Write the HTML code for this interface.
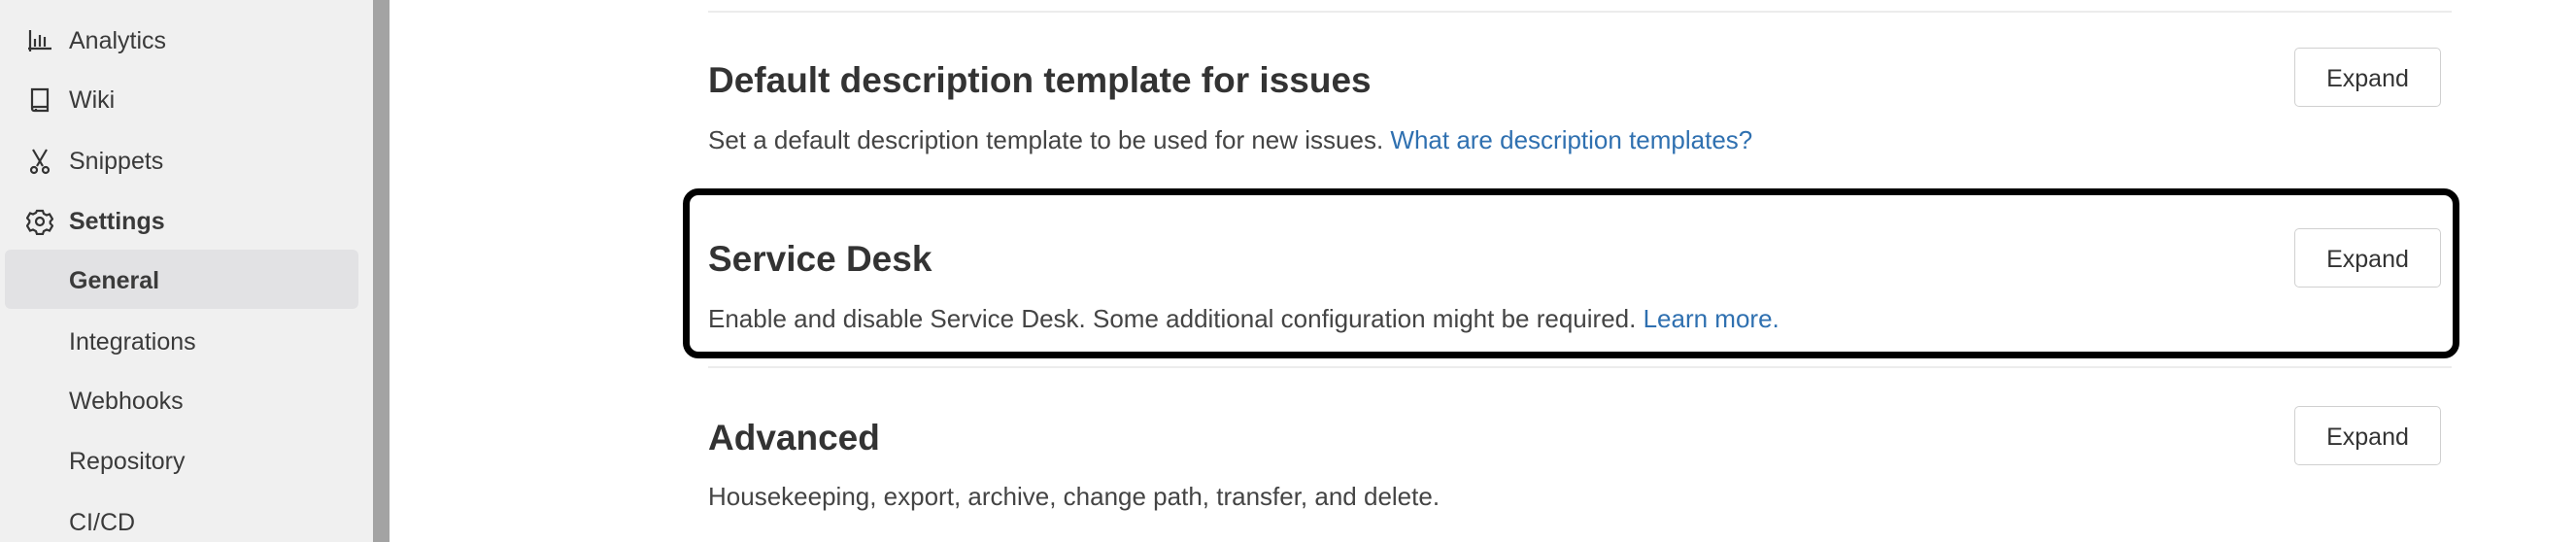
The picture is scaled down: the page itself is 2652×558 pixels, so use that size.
<!DOCTYPE html>
<html><head><meta charset="utf-8"><style>
*{margin:0;padding:0;box-sizing:border-box}
body{width:2652px;height:558px;overflow:hidden;background:#fff;font-family:"Liberation Sans",sans-serif;position:relative;color:#333}
.side{position:absolute;left:0;top:0;width:384px;height:558px;background:#f0f0f0}
.bar{position:absolute;left:384px;top:0;width:17px;height:558px;background:#a3a3a3}
.it{position:absolute;left:71px;font-size:25px;color:#3a3a3a;line-height:30px;transform:translateY(-15px)}
.ic{position:absolute;left:27px;width:28px;height:28px;transform:translateY(-14px)}
.hl{position:absolute;left:5px;top:257px;width:364px;height:61px;background:#e2e2e4;border-radius:6px}
.t{position:absolute;left:729px;white-space:nowrap}
h2{font-size:37px;font-weight:600;color:#333;line-height:42px;transform:translateY(-21px)}
.d{font-size:26px;color:#444;line-height:30px;transform:translateY(-15px)}
.d a{color:#2f70b0;text-decoration:none}
.ln{position:absolute;left:729px;width:1795px;height:2px;background:#ececec}
.btn{position:absolute;left:2362px;width:151px;height:61px;border:1.5px solid #d0d0d0;border-radius:5px;font-size:25px;color:#333;display:flex;align-items:center;justify-content:center;background:#fff;padding-top:3px}
.box{position:absolute;left:703px;top:194px;width:1829px;height:175px;border:7px solid #000;border-radius:16px}
</style></head><body>
<div class="side"></div><div class="bar"></div>
<div class="hl"></div>
<svg class="ic" style="top:42px" viewBox="0 0 28 28" fill="none" stroke="#333" stroke-width="2.2"><path d="M4 3v22M2 22h24M9 12v8M14 8v12M19 10v10"/></svg>
<div class="it" style="top:42px">Analytics</div>
<svg class="ic" style="top:103px" viewBox="0 0 28 28" fill="none" stroke="#333" stroke-width="2.2"><path d="M6 3h16v18H8a2 2 0 0 0-2 2v-20zM6 23a2 2 0 0 0 2 2h14v-4M10 25v-2"/></svg>
<div class="it" style="top:103px">Wiki</div>
<svg class="ic" style="top:166px" viewBox="0 0 28 28" fill="none" stroke="#333" stroke-width="2.2"><path d="M7 2l10 17M21 2L11 19"/><circle cx="8" cy="23" r="3"/><circle cx="20" cy="23" r="3"/></svg>
<div class="it" style="top:166px">Snippets</div>
<svg class="ic" style="top:228px" viewBox="0 0 28 28" fill="none" stroke="#333" stroke-width="2.2"><path d="M11 3h6l1 3 3 1.5 3-1 3 5-2.3 2.5v2l2.3 2.5-3 5-3-1-3 1.5-1 3h-6l-1-3-3-1.5-3 1-3-5L3.3 15v-2L1 10.5l3-5 3 1L10 5z"/><circle cx="14" cy="14" r="4"/></svg>
<div class="it" style="top:228px;font-weight:bold">Settings</div>
<div class="it" style="top:289px;font-weight:bold">General</div>
<div class="it" style="top:352px">Integrations</div>
<div class="it" style="top:413px">Webhooks</div>
<div class="it" style="top:475px">Repository</div>
<div class="it" style="top:538px">CI/CD</div>

<div class="ln" style="top:11px"></div>
<h2 class="t" style="top:83px">Default description template for issues</h2>
<div class="t d" style="top:144px">Set a default description template to be used for new issues. <a>What are description templates?</a></div>
<div class="btn" style="top:49px">Expand</div>

<div class="box"></div>
<h2 class="t" style="top:267px">Service Desk</h2>
<div class="t d" style="top:328px">Enable and disable Service Desk. Some additional configuration might be required. <a>Learn more.</a></div>
<div class="btn" style="top:235px">Expand</div>
<div class="ln" style="top:377px"></div>

<h2 class="t" style="top:451px">Advanced</h2>
<div class="t d" style="top:511px">Housekeeping, export, archive, change path, transfer, and delete.</div>
<div class="btn" style="top:418px">Expand</div>
</body></html>
